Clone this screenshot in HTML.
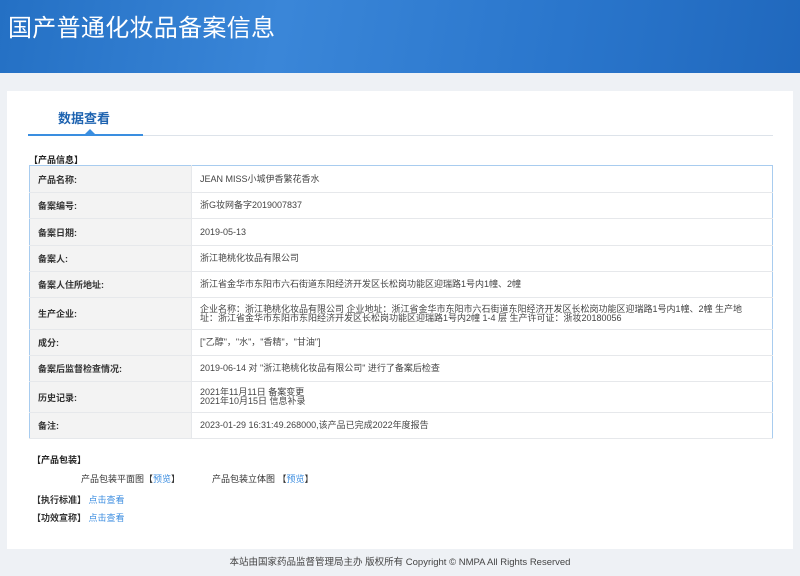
<!DOCTYPE html>
<html><head><meta charset="utf-8"><style>
*{margin:0;padding:0;box-sizing:border-box}
body{width:800px;height:576px;background:#eef1f5;font-family:"Liberation Sans","Noto Sans CJK SC",sans-serif;font-size:9px;color:#333;position:relative;overflow:hidden}
.hd{position:absolute;left:0;top:0;width:800px;height:73px;background:linear-gradient(100deg,#2470c4 0%,#3a86d8 35%,#2a76cc 70%,#2068bd 100%)}
.hd h1{position:absolute;left:8px;top:8px;font-size:24px;font-weight:normal;color:#fff;letter-spacing:0.3px}
.panel{position:absolute;left:7px;top:91px;width:786px;height:458px;background:#fff}
.tab{position:absolute;left:51px;top:17px;font-size:13px;color:#1e63b0;font-weight:bold}
.line{position:absolute;left:21px;top:44px;width:745px;height:1px;background:#dde3ea}
.uline{position:absolute;left:21px;top:43px;width:115px;height:2px;background:#3a8ee0}
.tri{position:absolute;left:78px;top:38px;width:0;height:0;border-left:5px solid transparent;border-right:5px solid transparent;border-bottom:5px solid #3a8ee0}
.sec{position:absolute;font-weight:bold;font-size:9px;color:#222}
table{position:absolute;left:22px;top:74px;width:744px;border-collapse:collapse;border:1px solid #a8ccef}
td{border-bottom:1px solid #e6e8eb;font-size:9px;vertical-align:middle}
td.l{width:162px;background:#f3f3f3;font-weight:bold;padding-left:8px;border-right:1px solid #e6e8eb;color:#333}
td.v{padding-left:8px;line-height:9px;color:#444}
a{color:#3d8ee0;text-decoration:none}
.ft{position:absolute;top:554px;left:0;width:800px;text-align:center;font-size:9.5px;color:#444}
</style></head><body>
<div class="hd"><h1>国产普通化妆品备案信息</h1></div>
<div class="panel">
<div class="tab">数据查看</div>
<div class="line"></div><div class="uline"></div><div class="tri"></div>
<div class="sec" style="left:22px;top:62px">【产品信息】</div>
<table>
<tr style="height:27px"><td class="l">产品名称:</td><td class="v">JEAN MISS小城伊香繁花香水</td></tr>
<tr style="height:26px"><td class="l">备案编号:</td><td class="v">浙G妆网备字2019007837</td></tr>
<tr style="height:27px"><td class="l">备案日期:</td><td class="v">2019-05-13</td></tr>
<tr style="height:26px"><td class="l">备案人:</td><td class="v">浙江艳桃化妆品有限公司</td></tr>
<tr style="height:26px"><td class="l">备案人住所地址:</td><td class="v">浙江省金华市东阳市六石街道东阳经济开发区长松岗功能区迎瑞路1号内1幢、2幢</td></tr>
<tr style="height:32px"><td class="l">生产企业:</td><td class="v">企业名称：浙江艳桃化妆品有限公司 企业地址：浙江省金华市东阳市六石街道东阳经济开发区长松岗功能区迎瑞路1号内1幢、2幢 生产地<br>址：浙江省金华市东阳市东阳经济开发区长松岗功能区迎瑞路1号内2幢 1-4 层 生产许可证：浙妆20180056</td></tr>
<tr style="height:26px"><td class="l">成分:</td><td class="v">["乙醇"，"水"，"香精"，"甘油"]</td></tr>
<tr style="height:26px"><td class="l">备案后监督检查情况:</td><td class="v">2019-06-14 对 "浙江艳桃化妆品有限公司" 进行了备案后检查</td></tr>
<tr style="height:31px"><td class="l">历史记录:</td><td class="v">2021年11月11日 备案变更<br>2021年10月15日 信息补录</td></tr>
<tr style="height:26px"><td class="l">备注:</td><td class="v">2023-01-29 16:31:49.268000,该产品已完成2022年度报告</td></tr>
</table>
<div class="sec" style="left:25px;top:362px">【产品包装】</div>
<div style="position:absolute;left:74px;top:381px">产品包装平面图【<a>预览</a>】</div>
<div style="position:absolute;left:205px;top:381px">产品包装立体图 【<a>预览</a>】</div>
<div style="position:absolute;left:25px;top:402px"><b>【执行标准】</b> <a>点击查看</a></div>
<div style="position:absolute;left:25px;top:420px"><b>【功效宣称】</b> <a>点击查看</a></div>
</div>
<div class="ft">本站由国家药品监督管理局主办 版权所有 Copyright © NMPA All Rights Reserved</div>
</body></html>
